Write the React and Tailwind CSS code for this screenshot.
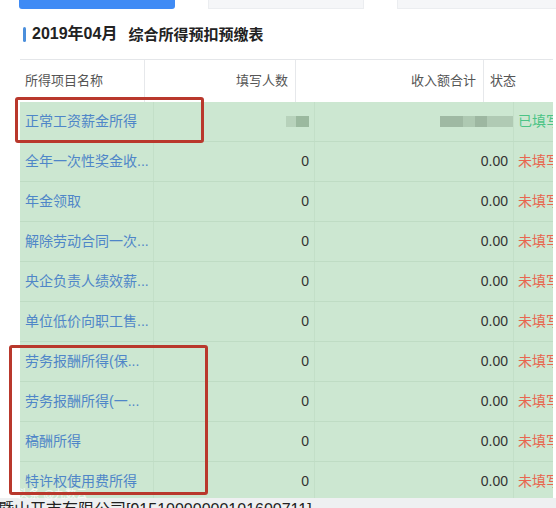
import React from "react";

const rows = [
  { name: "正常工资薪金所得", blur: true, done: true },
  { name: "全年一次性奖金收..." },
  { name: "年金领取" },
  { name: "解除劳动合同一次..." },
  { name: "央企负责人绩效薪..." },
  { name: "单位低价向职工售..." },
  { name: "劳务报酬所得(保..." },
  { name: "劳务报酬所得(一..." },
  { name: "稿酬所得" },
  { name: "特许权使用费所得" },
];

export default function App() {
  return (
    <div
      className="relative w-[556px] h-[508px] overflow-hidden bg-white"
      style={{ fontFamily: '"Liberation Sans", "Noto Sans CJK SC", sans-serif' }}
    >
      {/* top buttons */}
      <div className="flex h-[9px] pl-[19px]">
        <div className="w-[156px] h-full bg-[#3f8bf5] rounded-b-[3px]" />
        <div className="ml-[33px] w-[156px] h-full bg-[#f5f6f8] border-x border-b border-[#ebedf0]" />
        <div className="ml-[33px] flex-1 h-full bg-[#f5f6f8] border-l border-b border-[#ebedf0]" />
      </div>

      {/* title */}
      <div className="flex h-[50px] items-center pl-[23px]">
        <div className="w-[3px] h-[15px] rounded-full bg-[#4b8fdc]" />
        <div className="ml-[6px] flex items-center font-bold text-[#222] leading-none whitespace-nowrap">
          <span className="text-[16px]">2019年04月</span>
          <span className="ml-[11px] text-[15px]">综合所得预扣预缴表</span>
        </div>
      </div>

      {/* table */}
      <div className="ml-[20px] w-[533px]">
        {/* header */}
        <div className="grid grid-cols-[125px_151px_188px_69px] h-[43px] border-t border-[#e4e6e9] bg-white text-[13px] text-[#555]">
          <div className="flex items-center pl-[5px] border-r border-[#e6e8eb]">所得项目名称</div>
          <div className="flex items-center justify-end pr-[7px] border-r border-[#e6e8eb]">填写人数</div>
          <div className="flex items-center justify-end pr-[7px] border-r border-[#e6e8eb]">收入额合计</div>
          <div className="flex items-center pl-[6px] whitespace-nowrap overflow-hidden">状态</div>
        </div>

        {/* body */}
        <div className="h-[396px] overflow-hidden bg-[#cce7d1]">
          {rows.map((r, i) => (
            <div
              key={i}
              className="grid grid-cols-[134px_161px_199px_39px] h-[40px] border-b border-[#bfdcc4] text-[14px]"
            >
              <div className="flex items-center pl-[5px] border-r border-[#c3dfc8] text-[#4f86c8] whitespace-nowrap overflow-hidden">
                {r.name}
              </div>
              <div className="flex items-center justify-end pr-[5px] border-r border-[#c3dfc8] text-[#333]">
                {r.blur ? (
                  <div className="flex h-[11px]">
                    <div className="w-[10px] bg-[#b7d2bb]" />
                    <div className="w-[13px] bg-[#9bb99f]" />
                  </div>
                ) : (
                  "0"
                )}
              </div>
              <div className="flex items-center justify-end pr-[5px] border-r border-[#c3dfc8] text-[#333]">
                {r.blur ? (
                  <div className="flex h-[11px] ml-auto -mr-[5px]">
                    <div className="w-[23px] bg-[#9fb9a3]" />
                    <div className="w-[12px] bg-[#aec9b2]" />
                    <div className="w-[12px] bg-[#9db7a1]" />
                    <div className="w-[26px] bg-[#b0cab4]" />
                  </div>
                ) : (
                  "0.00"
                )}
              </div>
              <div
                className={
                  "flex items-center pl-[4px] whitespace-nowrap overflow-hidden " +
                  (r.done ? "text-[#4cc486]" : "text-[#e8664f]")
                }
              >
                {r.done ? "已填写" : "未填写"}
              </div>
            </div>
          ))}
        </div>
      </div>

      {/* bottom strip */}
      <div className="h-[10px] overflow-hidden bg-[#eef0f1]">
        <div className="text-[16px] leading-[18px] mt-[3px] text-[#222] whitespace-nowrap -ml-[2px]">
          暨山开市有限公司[91510000000101600711]
        </div>
      </div>

      {/* watermark */}
      <div className="absolute left-[10px] top-[488px] text-[11px] leading-[12px] text-white/80 whitespace-nowrap">
        ©头条 @九数云
      </div>

      {/* red highlight boxes */}
      <div className="absolute left-[15px] top-[97px] w-[189px] h-[46px] border-[3px] border-[#b9382c] rounded-[3px]" />
      <div className="absolute left-[9px] top-[345px] w-[199px] h-[150px] border-[3px] border-[#b9382c] rounded-[3px]" />
    </div>
  );
}
